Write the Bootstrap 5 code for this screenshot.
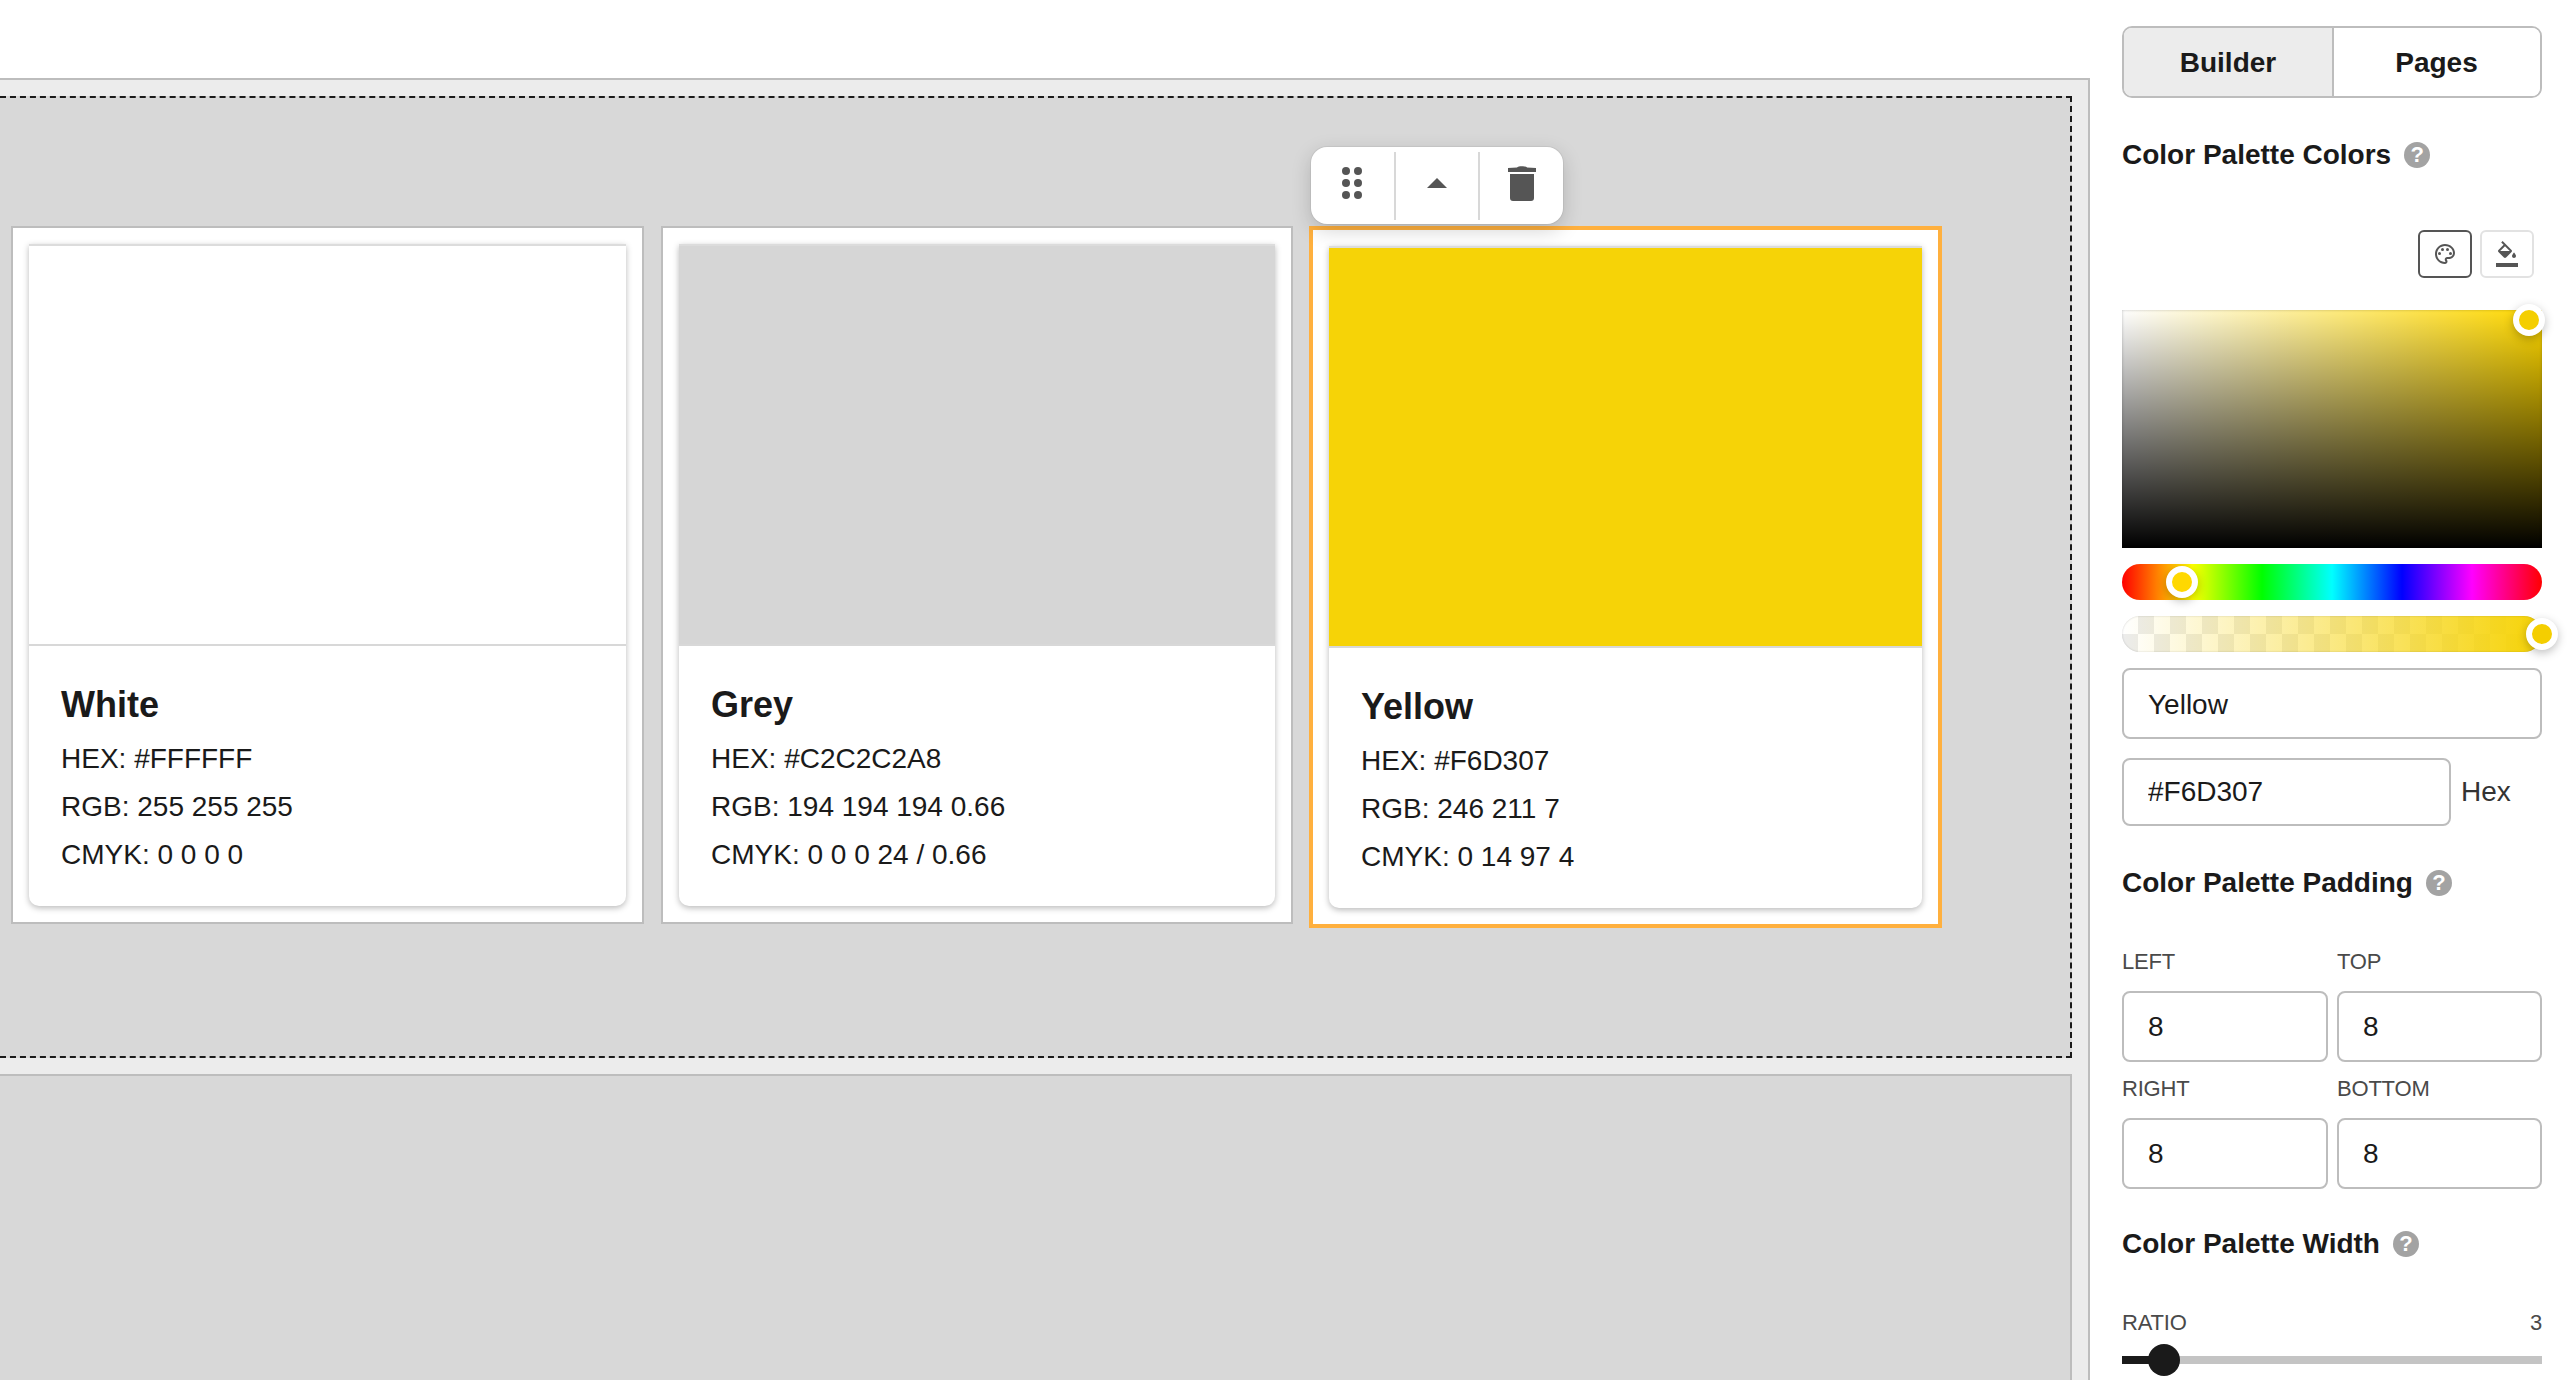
<!DOCTYPE html>
<html lang="en">
<head>
<meta charset="utf-8">
<title>Color Palette Builder</title>
<link href="https://cdn.jsdelivr.net/npm/bootstrap@5.3.0/dist/css/bootstrap.min.css" rel="stylesheet">
<style>
html,body{height:1380px;overflow:hidden;background:#fff}
body{color:#1a1a1a;font-family:"Liberation Sans",Arial,sans-serif;font-size:28px}
.shell{height:1380px;width:2574px}
.canvas-wrap{width:2090px;height:1302px;margin-top:78px;background:#ececec;border-top:2px solid #bdbdbd;border-right:2px solid #bdbdbd;flex:none;overflow:hidden}
.drop-block{width:2072px;height:962px;margin-top:16px;background:#d8d8d8;border:2px dashed #1a1a1a;border-left:0;padding:128px 0 0 11px}
.empty-block{width:2072px;height:400px;margin-top:16px;background:#d8d8d8;border-top:2px solid #bdbdbd;border-right:2px solid #bdbdbd}
.swatch-row{gap:17px}
.cell{width:632px;background:#fff;border:2px solid #bdbdbd;padding:16px;flex:none}
.cell-first{width:633px}
.cell-on{position:relative;width:633px;margin-left:-1px;border:4px solid #ffb03e}
.palette-card{border:0;border-radius:0 0 10px 10px;box-shadow:0 2px 6px rgba(0,0,0,.28);--bs-card-bg:#fff}
.swatch{height:402px;border-top:2px solid #dcdcdc;border-bottom:2px solid #d8d8d8}
.palette-body{padding:37px 32px 27px;height:260px}
.palette-name{font-size:36px;font-weight:700;line-height:44px;margin:0 0 8px}
.palette-line{font-size:28px;line-height:48px;margin:0;white-space:nowrap}
.floating-tools{position:absolute;left:-2px;top:-83px;width:252px;height:77px;background:#fff;border-radius:16px;box-shadow:0 6px 20px rgba(0,0,0,.18),0 0 0 1px rgba(0,0,0,.05)}
.tool-slot{flex:1 1 0;height:68px;border-right:2px solid #d8d8d8;padding-bottom:5px}
.tool-slot:last-child{border-right:0}
.side{width:484px;padding:26px 32px 0;flex:none}
.tabs{width:420px;height:72px;border:2px solid #bdbdbd;border-radius:10px;overflow:hidden}
.tabs .btn{flex:1 1 0;font-size:28px;font-weight:700;color:#1a1a1a;border:0;border-radius:0;padding:0;line-height:70px;background:#fff}
.tabs .btn.active{flex:0 0 210px;background:#ececec;border-right:2px solid #bdbdbd;color:#1a1a1a}
.sec-title{font-size:28px;font-weight:700;line-height:40px;margin:0;white-space:nowrap;gap:13px}
.help-dot{width:26px;height:26px;border-radius:50%;background:#a3a3a3;color:#fff;font-size:22px;font-weight:700;line-height:26px;text-align:center;flex:none}
.mode-btn{width:54px;height:48px;padding:0;background:#fff;border:2px solid #e2e2e2;border-radius:6px}
.mode-btn.picked{border-color:#555}
.sat-box{position:relative;height:238px;background:linear-gradient(to top,#000,rgba(0,0,0,0)),linear-gradient(to right,#fff,rgba(255,255,255,0)),#ffd800;box-shadow:inset 0 0 3px rgba(0,0,0,.25)}
.knob{position:absolute;width:32px;height:32px;border-radius:50%;border:6px solid #fff;box-shadow:0 3px 10px rgba(0,0,0,.25);transform:translate(-50%,-50%)}
.hue-bar,.alpha-bar{position:relative;height:36px;border-radius:18px}
.hue-bar{background:linear-gradient(to right,#f00 0%,#ff0 16.66%,#0f0 33.33%,#0ff 50%,#00f 66.66%,#f0f 83.33%,#f00 100%)}
.alpha-bar{background:linear-gradient(to right,rgba(246,211,7,0),#f6d307),conic-gradient(#ececec 25%,#fff 0 50%,#ececec 0 75%,#fff 0) 0 0/32px 36px}
.alpha-bar::after{content:"";position:absolute;inset:0;border-radius:18px;box-shadow:inset 0 0 2px rgba(0,0,0,.2)}
.field{height:71px;border:2px solid #bdbdbd;border-radius:8px;padding:0 24px;font-size:28px;color:#1a1a1a;font-family:inherit;box-shadow:none}
.field-tall{height:71px;padding-top:2px}
.hex-field{width:329px;height:68px;flex:none}
.hex-label{font-size:28px;color:#333;margin-left:10px}
.pad-grid{display:grid;grid-template-columns:206px 205px;column-gap:9px}
.mini-label{font-size:22px;line-height:32px;color:#4a4a4a;margin:0 0 13px;letter-spacing:-.2px}
.track{position:relative;height:8px;background:#c4c4c4}
.track-fill{height:8px;background:#1a1a1a}
.track-knob{position:absolute;left:42px;top:4px;width:32px;height:32px;border-radius:50%;background:#1a1a1a;transform:translate(-50%,-50%)}
.gap-top-37{margin-top:37px}.gap-top-55{margin-top:55px}.gap-top-32{margin-top:32px}.gap-top-16{margin-top:16px}.gap-top-19{margin-top:19px}.gap-top-43{margin-top:43px}.gap-top-11{margin-top:11px}.gap-top-35{margin-top:35px}.gap-top-17{margin-top:17px}
.inset-right{padding-right:8px}
</style>
</head>
<body>
<div class="shell d-flex">
  <main class="canvas-wrap">
    <section class="drop-block">
      <div class="d-flex align-items-start swatch-row">
        <div class="cell cell-first">
          <div class="card palette-card">
            <div class="swatch bg-white"></div>
            <div class="palette-body">
              <h5 class="palette-name">White</h5>
              <p class="palette-line">HEX: #FFFFFF</p>
              <p class="palette-line">RGB: 255 255 255</p>
              <p class="palette-line">CMYK: 0 0 0 0</p>
            </div>
          </div>
        </div>
        <div class="cell">
          <div class="card palette-card">
            <div class="swatch" style="background:#d6d6d6"></div>
            <div class="palette-body">
              <h5 class="palette-name">Grey</h5>
              <p class="palette-line">HEX: #C2C2C2A8</p>
              <p class="palette-line">RGB: 194 194 194 0.66</p>
              <p class="palette-line">CMYK: 0 0 0 24 / 0.66</p>
            </div>
          </div>
        </div>
        <div class="cell cell-on">
          <div class="floating-tools d-flex align-items-center">
            <div class="tool-slot d-flex align-items-center justify-content-center">
              <svg width="24" height="36" viewBox="0 0 24 36" fill="#555"><circle cx="6" cy="6" r="4"/><circle cx="18" cy="6" r="4"/><circle cx="6" cy="18" r="4"/><circle cx="18" cy="18" r="4"/><circle cx="6" cy="30" r="4"/><circle cx="18" cy="30" r="4"/></svg>
            </div>
            <div class="tool-slot d-flex align-items-center justify-content-center">
              <svg width="20" height="10" viewBox="0 0 20 10" fill="#555"><path d="M10 0 20 10H0z"/></svg>
            </div>
            <div class="tool-slot d-flex align-items-center justify-content-center">
              <svg width="28" height="36" viewBox="0 0 28 36" fill="#555"><path d="M9 2.500C10 .8 18 .8 19 2.500L28 3v4H0V3zM2 9h24v24a3 3 0 0 1-3 3H5a3 3 0 0 1-3-3z"/></svg>
            </div>
          </div>
          <div class="card palette-card">
            <div class="swatch" style="background:#f6d307"></div>
            <div class="palette-body">
              <h5 class="palette-name">Yellow</h5>
              <p class="palette-line">HEX: #F6D307</p>
              <p class="palette-line">RGB: 246 211 7</p>
              <p class="palette-line">CMYK: 0 14 97 4</p>
            </div>
          </div>
        </div>
      </div>
    </section>
    <section class="empty-block"></section>
  </main>

  <aside class="side">
    <div class="btn-group tabs d-flex" role="group">
      <button type="button" class="btn active">Builder</button>
      <button type="button" class="btn">Pages</button>
    </div>

    <h6 class="sec-title d-flex align-items-center gap-top-37">Color Palette Colors <span class="help-dot">?</span></h6>

    <div class="d-flex justify-content-end gap-2 inset-right gap-top-55">
      <button type="button" class="mode-btn picked d-flex align-items-center justify-content-center" aria-label="Palette">
        <svg width="24" height="24" viewBox="0 0 24 24" fill="#555"><path d="M12 22C6.490 22 2 17.510 2 12S6.490 2 12 2s10 4.040 10 9c0 3.310-2.690 6-6 6h-1.770c-.28 0-.5.22-.5.5 0 .12.05.23.13.33.41.47.64 1.060.64 1.670 0 1.380-1.120 2.500-2.500 2.500zm0-18c-4.410 0-8 3.590-8 8s3.590 8 8 8c.28 0 .5-.22.5-.5 0-.16-.08-.28-.14-.35-.41-.46-.63-1.050-.63-1.650 0-1.380 1.120-2.500 2.500-2.500H16c2.210 0 4-1.790 4-4 0-3.860-3.590-7-8-7z"/><circle cx="6.500" cy="11.500" r="1.500"/><circle cx="9.500" cy="7.500" r="1.500"/><circle cx="14.500" cy="7.500" r="1.500"/><circle cx="17.500" cy="11.500" r="1.500"/></svg>
      </button>
      <button type="button" class="mode-btn d-flex align-items-center justify-content-center" aria-label="Fill">
        <svg width="22" height="26" viewBox="0 0 22 26" fill="#555"><path transform="translate(-1 0)" d="M16.560 8.940 7.620 0 6.210 1.410l2.380 2.380-5.150 5.150c-.59.59-.59 1.540 0 2.120l5.500 5.500c.29.29.68.44 1.060.44s.77-.15 1.060-.44l5.500-5.500c.59-.58.59-1.530 0-2.120zM5.210 10 10 5.210 14.790 10H5.210zM19 11.500s-2 2.170-2 3.500c0 1.100.9 2 2 2s2-.9 2-2c0-1.330-2-3.500-2-3.500z"/><rect y="22" width="22" height="4"/></svg>
      </button>
    </div>

    <div class="sat-box gap-top-32">
      <span class="knob" style="left:407px;top:10px;background:#f4ce00"></span>
    </div>
    <div class="hue-bar gap-top-16">
      <span class="knob" style="left:60px;top:18px;background:#ffd800"></span>
    </div>
    <div class="alpha-bar gap-top-16">
      <span class="knob" style="left:420px;top:18px;background:#f4ce00;z-index:1"></span>
    </div>

    <input class="form-control field field-tall gap-top-16" type="text" value="Yellow" aria-label="Name">
    <div class="d-flex align-items-center gap-top-19">
      <input class="form-control field hex-field" type="text" value="#F6D307" aria-label="Hex">
      <span class="hex-label">Hex</span>
    </div>

    <h6 class="sec-title d-flex align-items-center gap-top-37">Color Palette Padding <span class="help-dot">?</span></h6>

    <div class="pad-grid gap-top-43">
      <div><p class="mini-label">LEFT</p><input class="form-control field" type="text" value="8" aria-label="Left"></div>
      <div><p class="mini-label">TOP</p><input class="form-control field" type="text" value="8" aria-label="Top"></div>
      <div class="gap-top-11"><p class="mini-label">RIGHT</p><input class="form-control field" type="text" value="8" aria-label="Right"></div>
      <div class="gap-top-11"><p class="mini-label">BOTTOM</p><input class="form-control field" type="text" value="8" aria-label="Bottom"></div>
    </div>

    <h6 class="sec-title d-flex align-items-center gap-top-35">Color Palette Width <span class="help-dot">?</span></h6>

    <div class="d-flex justify-content-between gap-top-43">
      <span class="mini-label m-0">RATIO</span><span class="mini-label m-0">3</span>
    </div>
    <div class="track gap-top-17">
      <div class="track-fill" style="width:42px"></div>
      <span class="track-knob"></span>
    </div>
  </aside>
</div>
<script src="https://cdn.jsdelivr.net/npm/bootstrap@5.3.0/dist/js/bootstrap.bundle.min.js"></script>
</body>
</html>
